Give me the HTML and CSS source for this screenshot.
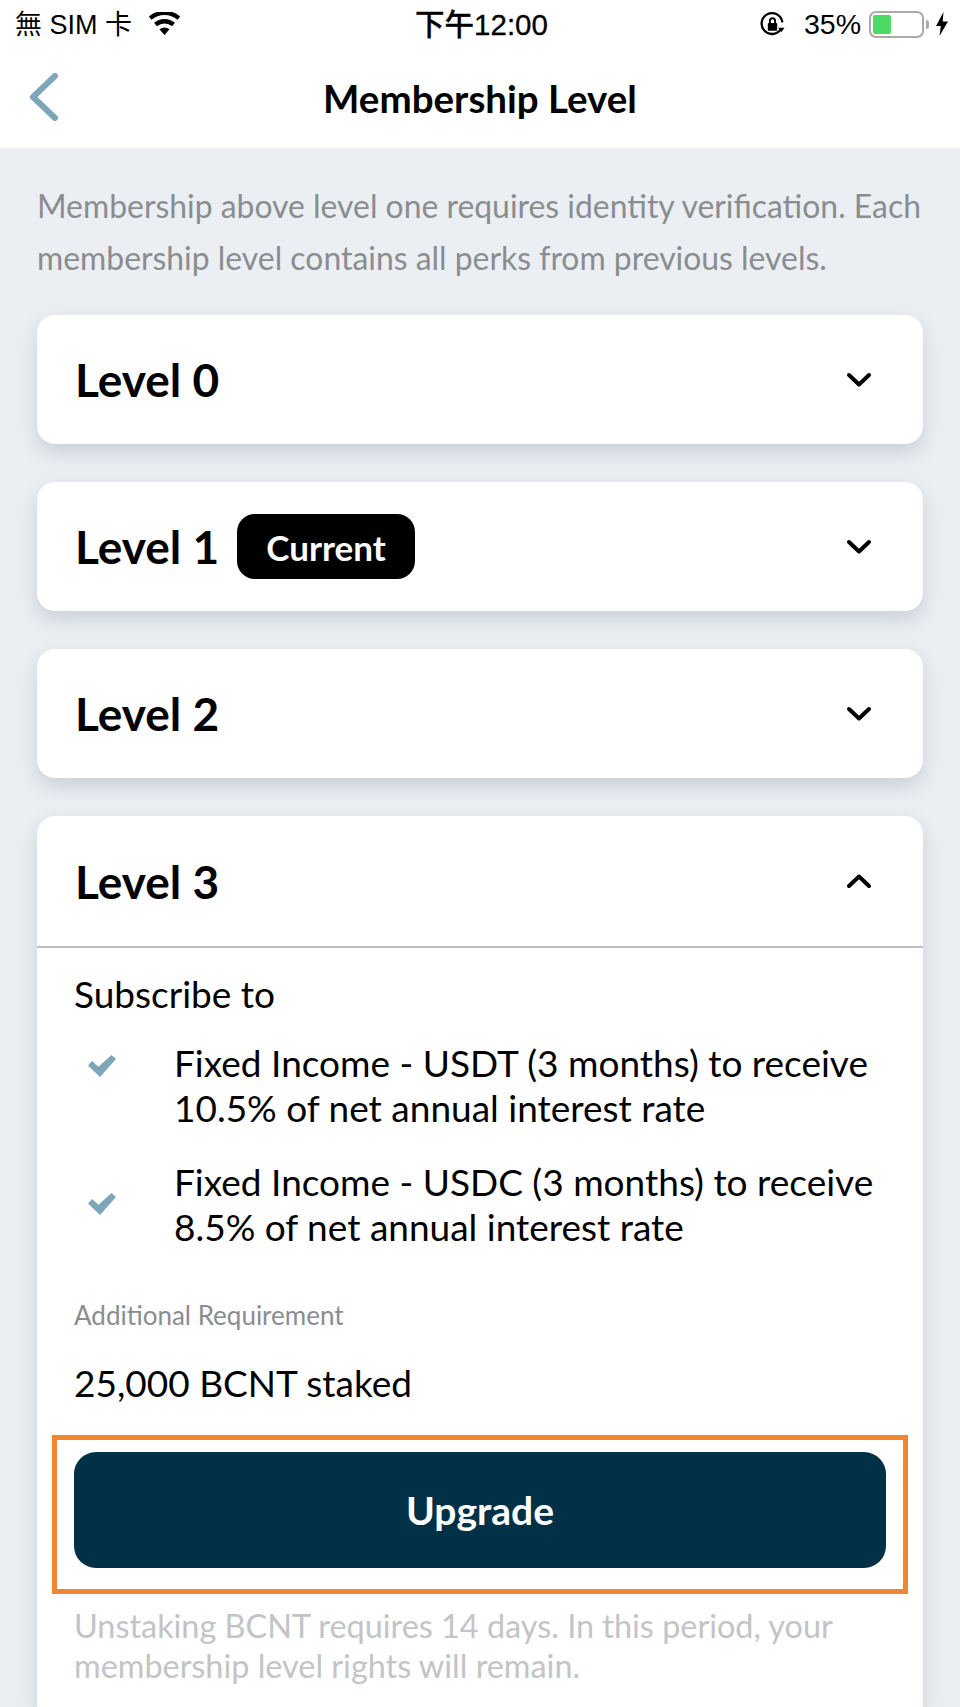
FILE: index.html
```html
<!DOCTYPE html>
<html lang="en">
<head>
<meta charset="utf-8">
<title>Membership Level</title>
<link rel="stylesheet" href="styles.css">
</head>
<body>
<div class="top">
  <div class="status">
    <div class="st-left">
      <span class="st-text">無 SIM 卡</span>
      <svg class="wifi" viewBox="0 0 34 26"><path d="M17 25 11.6 18.6a8.6 8.6 0 0 1 10.8 0Z"/><path d="M8.8 15.4 5.7 11.7a17.6 17.6 0 0 1 22.6 0l-3.1 3.7a12.8 12.8 0 0 0-16.4 0Z"/><path d="M2.9 8.4 0 4.9a26.4 26.4 0 0 1 34 0l-2.9 3.5a21.8 21.8 0 0 0-28.2 0Z"/></svg>
    </div>
    <div class="st-time st-text">下午12:00</div>
    <div class="st-right">
      <svg class="lock" viewBox="0 0 24 24"><path class="lock-ring" d="M20 16.5A10 10 0 1 1 21.5 10"/><path class="lock-arrow" d="M17.5 15h6l-3 4.500Z"/><rect class="lock-body" x="7.500" y="10.500" width="9" height="7.500" rx="1"/><path class="lock-ring thin" d="M9.500 10.500V8.500a2.500 2.500 0 0 1 5 0v2"/></svg>
      <span class="pct">35%</span>
      <div class="battery"><div class="level"></div></div>
      <div class="nub"></div>
      <svg class="bolt" viewBox="0 0 12 24"><path d="M7.500 0 0 14h4.800L3.500 24 12 9.500H6.700Z"/></svg>
    </div>
  </div>
  <div class="nav">
    <svg class="back" viewBox="0 0 32 48"><path d="M27 3 5 24l22 21"/></svg>
    <h1>Membership Level</h1>
  </div>
</div>
<main class="page">
  <p class="intro">Membership above level one requires identity verification. Each membership level contains all perks from previous levels.</p>
  <section class="card">
    <div class="card-head">
      <h2>Level 0</h2>
      <svg class="chev" viewBox="0 0 26 16"><path d="M3 3l10 9.500L23 3"/></svg>
    </div>
  </section>
  <section class="card">
    <div class="card-head">
      <h2>Level 1</h2>
      <span class="badge">Current</span>
      <svg class="chev" viewBox="0 0 26 16"><path d="M3 3l10 9.500L23 3"/></svg>
    </div>
  </section>
  <section class="card">
    <div class="card-head">
      <h2>Level 2</h2>
      <svg class="chev" viewBox="0 0 26 16"><path d="M3 3l10 9.500L23 3"/></svg>
    </div>
  </section>
  <section class="card open">
    <div class="card-head bordered">
      <h2>Level 3</h2>
      <svg class="chev" viewBox="0 0 26 16"><path d="M3 13l10-9.500L23 13"/></svg>
    </div>
    <div class="card-body">
      <p class="sub">Subscribe to</p>
      <div class="perk perk-top">
        <svg class="check" viewBox="0 0 28 22"><path d="M0 10.500 4 6l6.500 5.700L23.500 0 28 4 12 22Z"/></svg>
        <p>Fixed Income - USDT (3 months) to receive 10.5% of net annual interest rate</p>
      </div>
      <div class="perk">
        <svg class="check" viewBox="0 0 28 22"><path d="M0 10.500 4 6l6.500 5.700L23.500 0 28 4 12 22Z"/></svg>
        <p>Fixed Income - USDC (3 months) to receive 8.5% of net annual interest rate</p>
      </div>
      <p class="req-label">Additional Requirement</p>
      <p class="req">25,000 BCNT staked</p>
      <div class="highlight"><button class="upgrade">Upgrade</button></div>
      <p class="note">Unstaking BCNT requires 14 days. In this period, your membership level rights will remain.</p>
    </div>
  </section>
</main>
</body>
</html>
```
FILE: styles.css
```css
* { box-sizing: border-box; }
html, body { margin: 0; height: 1707px; overflow: hidden; }
body { background: #ebeff3; font-family: Lato, "Noto Sans", sans-serif; color: #000; display: flex; flex-direction: column; }
p, h1, h2 { margin: 0; }

.top { background: #fff; height: 148px; flex: none; }
.status { height: 48px; display: flex; align-items: center; justify-content: space-between; padding: 0 12px 0 15px; font-family: "Liberation Sans", "Noto Sans CJK TC", sans-serif; font-size: 27px; }
.st-text { margin-bottom: 4px; }
.st-left { display: flex; align-items: center; gap: 16px; width: 300px; }
.wifi { width: 33px; height: 24px; fill: #000; }
.st-time { font-weight: 500; font-size: 29.500px; -webkit-text-stroke: .3px #000; }
.st-right { display: flex; align-items: center; justify-content: flex-end; width: 300px; font-size: 28.500px; }
.lock { width: 25px; height: 25px; margin-right: 19px; }
.lock-ring { fill: none; stroke: #000; stroke-width: 2.200; }
.lock-ring.thin { stroke-width: 1.800; }
.lock-arrow, .lock-body { fill: #000; }
.pct { margin-right: 8px; }
.battery { width: 55px; height: 27px; border: 2px solid #aaa; border-radius: 7px; padding: 2px; background: #fff; }
.level { width: 18px; height: 19px; background: #4cd964; border-radius: 2px; }
.nub { width: 3px; height: 9px; background: #aaa; border-radius: 0 3px 3px 0; margin-left: 2px; margin-right: 7px; }
.bolt { width: 12px; height: 24px; fill: #000; }

.nav { height: 100px; display: flex; align-items: center; justify-content: center; position: relative; }
.back { position: absolute; left: 28px; top: 25px; width: 32px; height: 48px; fill: none; stroke: #7ea6b9; stroke-width: 6; stroke-linecap: round; stroke-linejoin: round; }
.nav h1 { font-size: 38.500px; font-weight: 700; line-height: 48px; }

.page { padding: 32px 37px 0; flex: 1; min-height: 0; display: flex; flex-direction: column; gap: 38px; }
.intro { color: #8a8d90; font-size: 31.900px; line-height: 52px; margin: 0 -10px -7px 0; }

.card { background: #fff; border-radius: 18px; box-shadow: 0 8px 20px rgba(60, 80, 100, .2); flex: none; }
.card.open { flex: 1; border-radius: 18px 18px 0 0; }
.card-head { height: 129px; display: flex; align-items: center; padding: 0 51px 0 38px; }
.card-head h2 { font-size: 46px; font-weight: 700; }
.card-head.bordered { height: 132px; border-bottom: 2px solid #bdbec2; }
.chev { width: 26px; height: 16px; margin-left: auto; fill: none; stroke: #000; stroke-width: 4; stroke-linecap: round; stroke-linejoin: round; }

.badge { background: #000; color: #fff; font-size: 35px; font-weight: 700; border-radius: 18px; height: 65px; width: 178px; display: flex; align-items: center; justify-content: center; margin-left: 18px; }

.card-body { padding: 23px 37px 0; font-size: 37px; line-height: 45px; }
.sub { margin-bottom: 24px; }
.perk { display: flex; align-items: center; margin-bottom: 29px; }
.perk p { flex: 1; margin-right: -8px; }
.perk-top { align-items: flex-start; }
.perk-top .check { margin-top: 15px; }
.check { flex: none; width: 28px; height: 22px; margin: 0 58px 0 14px; fill: #7ea6b9; }
.req-label { color: #8a8d90; font-size: 26px; line-height: 34px; margin-top: 49px; }
.req { margin-top: 28px; line-height: 45px; }
.highlight { border: 5px solid #f58431; margin: 30px -22px 0; padding: 12px 17px 21px; }
.upgrade { display: block; width: 100%; height: 116px; border: 0; border-radius: 22px; background: #003146; color: #fff; font: 700 39px Lato, sans-serif; }
.note { color: #c3c4c7; font-size: 32.400px; line-height: 40px; margin-top: 12px; }
```
